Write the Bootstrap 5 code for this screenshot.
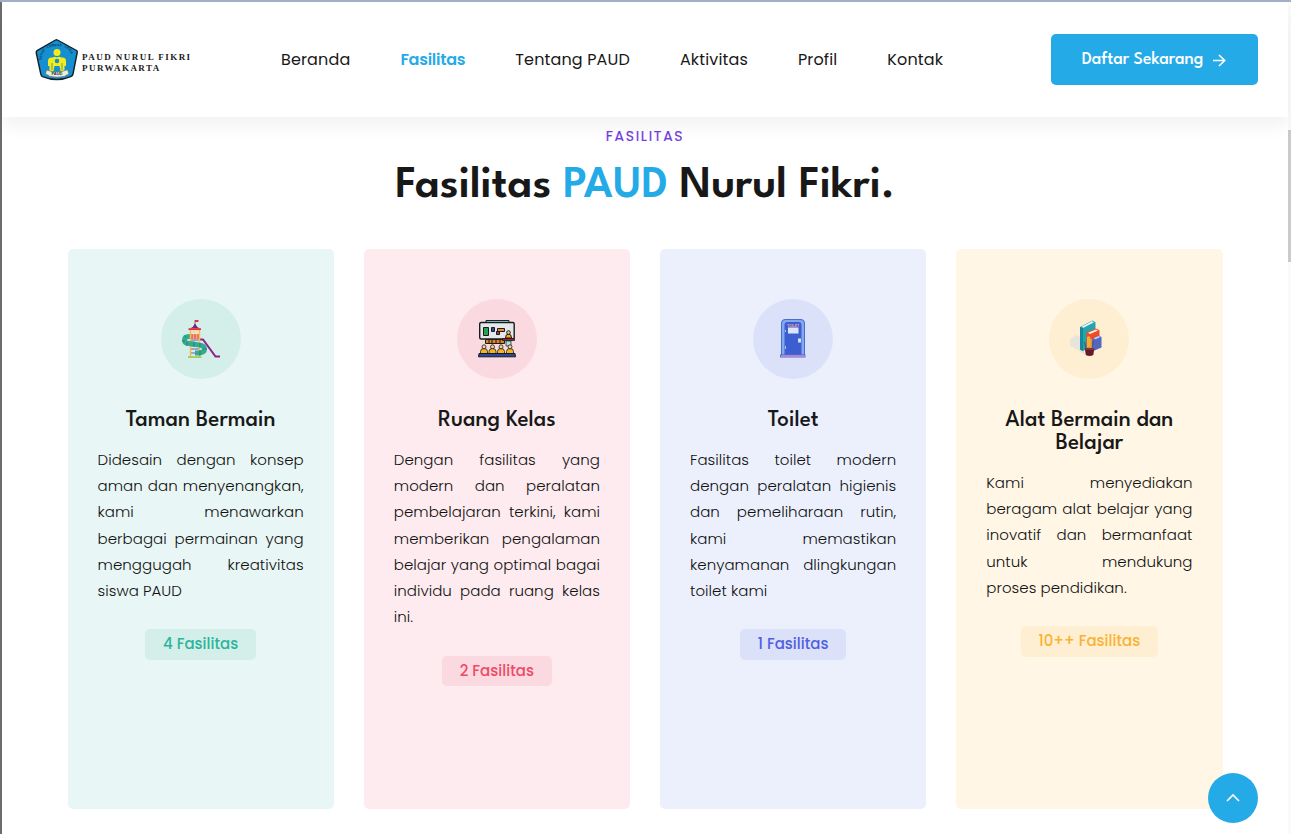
<!DOCTYPE html>
<html lang="id">
<head>
<meta charset="utf-8">
<meta name="viewport" content="width=device-width, initial-scale=1">
<title>PAUD Nurul Fikri Purwakarta</title>
<link rel="stylesheet" href="https://cdn.jsdelivr.net/npm/bootstrap@5.3.0/dist/css/bootstrap.min.css">
<style>
  :root { --brand: #25aae8; --ink: #181818; }
  body { font-family: Poppins, Inter, sans-serif; color: var(--ink); height: 834px; overflow: hidden; border-top: 2px solid #a3afc5; background: #fff; }
  .page-shell { height: 832px; border-left: 2px solid #6c6c6c; }
  .site-header { height: 115px; padding: 0 30px 0 33px; background: #fff; box-shadow: 0 10px 15px rgba(25,25,25,.05); z-index: 2; }
  .brand-mark { width: 158px; }
  .brand-text { font: 700 9px/11px "Liberation Serif", serif; letter-spacing: 1.45px; color: #222; white-space: nowrap; margin: 6px 0 0 2px; }
  .main-menu { gap: 50px; margin-left: 88px; }
  .main-menu a { color: var(--ink); font-size: 16px; line-height: 24px; text-decoration: none; white-space: nowrap; letter-spacing: .14px; }
  .main-menu a.active { color: var(--brand); font-weight: 600; letter-spacing: -.25px; }
  .btn-signup { width: 207px; height: 51px; border-radius: 5px; background: var(--brand); color: #fff; font: 500 17.6px/24px "League Spartan", Lato, sans-serif; padding: 0; }
  .btn-signup span { padding-top: 1px; }
  .eyebrow { color: #6f3be0; font-size: 14px; line-height: 20px; letter-spacing: 1.75px; margin-top: 9px; font-weight: 400; -webkit-text-stroke: .2px; }
  .headline { font: 600 45px/50px "League Spartan", Lato, sans-serif; margin: 15px 0 38px; }
  .headline span { color: var(--brand); }
  .facility-row { width: 1185px; --bs-gutter-x: 30px; }
  .facility { height: 560px; border-radius: 5px; padding: 50px 30px 0; background: var(--bg); }
  .facility .round { width: 80px; height: 80px; background: var(--tint); margin-bottom: 30px; flex: none; }
  .facility h3 { font: 500 23px/23px "League Spartan", Lato, sans-serif; margin: 0 -5px 14.8px; text-align: center; }
  .facility p { color: #111; font-size: 15px; line-height: 26.25px; font-weight: 300; text-align: justify; margin: 0 0 25px; width: 206.25px; letter-spacing: .05px; }
  .facility .tag { background: var(--tint); color: var(--fg); height: 30.500px; width: var(--w); line-height: 30px; font-size: 15px; font-weight: 500; border-radius: 5px; text-align: center; }
  .f-green { --bg: #e8f6f5; --tint: #d4efea; --fg: #2db59b; --w: 111px; }
  .f-pink { --bg: #fdebef; --tint: #fbd9e0; --fg: #ee4a67; --w: 110px; }
  .f-blue { --bg: #ecf0fd; --tint: #dbe1f9; --fg: #5260df; --w: 106px; }
  .f-gold { --bg: #fff6e6; --tint: #ffefd2; --fg: #f9b234; --w: 137px; }
  .scroll-track { width: 3px; background: #fafafa; flex: none; }
  .scroll-thumb { height: 132px; margin-top: 128px; background: #cacaca; }
  .to-top { right: 33px; bottom: 11px; width: 50px; height: 50px; background: var(--brand); z-index: 3; }
</style>
</head>
<body>
<div class="page-shell d-flex">
  <div class="flex-grow-1">
    <header class="site-header position-relative d-flex align-items-center">
      <a class="brand-mark d-flex align-items-center text-decoration-none" href="#">
        <svg class="flex-shrink-0" width="45" height="44" viewBox="0 0 45 44">
          <path d="M20.500 2q1-.6 2 0L41.500 12.500q1 .6.700 2L38 36q-.4 2-2.300 2.600Q22 44.500 7.500 38.600 6.300 38 5.800 36L1.300 15q-.3-1.500.8-2.400Z" fill="#168fd0" stroke="#10212c" stroke-width="1.400"/>
          <path id="arc" d="M6.500 22Q7 8.500 21.700 8T37 22" fill="none"/>
          <text font-family="Liberation Sans" font-size="3.300" font-weight="700" fill="#0c3855"><textPath href="#arc">SEHAT · CERDAS · CERIA</textPath></text>
          <g fill="#f5ec18"><circle cx="22" cy="14.500" r="3.500"/><path d="M17.500 19.500q2.500-1.500 4.500 0 2-1.500 4.500 0 4.500-.5 4.500 3.500v5h-1.500v5h-4l-1-5h-5l-1 5h-4v-5H13v-5q0-4 4.500-3.500Z"/></g>
          <circle cx="22" cy="23" r="2.300" fill="#168fd0"/><path d="M17 25v7M27 25v7M22 28v5" stroke="#168fd0" stroke-width=".8"/>
          <path d="M11.500 32q10.500 4 21-.3l1.500 4.500q-3 .5-4 2-8 2-15.500 0-1-1.500-4-2Z" fill="#eceddc" stroke="#656a5a" stroke-width=".6"/>
          <text x="22" y="37.200" text-anchor="middle" font-family="Liberation Sans" font-size="4" font-weight="700" fill="#333">PAUD</text>
        </svg>
        <span class="brand-text">PAUD NURUL FIKRI<br>PURWAKARTA</span>
      </a>
      <nav class="main-menu d-flex">
        <a href="#">Beranda</a><a href="#" class="active">Fasilitas</a><a href="#">Tentang PAUD</a><a href="#">Aktivitas</a><a href="#">Profil</a><a href="#">Kontak</a>
      </nav>
      <a href="#" class="btn btn-signup ms-auto d-flex align-items-center justify-content-center gap-2"><span>Daftar Sekarang</span>
        <svg width="16" height="16" viewBox="0 0 16 16" fill="none" stroke="#fff" stroke-width="1.600"><path d="M2 8.500h11.500M8 3l5.700 5.500L8 14"/></svg>
      </a>
    </header>
    <main>
      <div class="text-center">
        <div class="eyebrow">FASILITAS</div>
        <h2 class="headline">Fasilitas <span>PAUD</span> Nurul Fikri.</h2>
      </div>
      <div class="row facility-row mx-auto">
        <div class="col-3"><article class="facility f-green d-flex flex-column align-items-center">
          <div class="round rounded-circle">
            <svg width="80" height="80" viewBox="0 0 80 80">
              <path d="M34 21v5" stroke="#777"/><path d="M34 21h3.500v2H34Z" fill="#dc323c"/>
              <path d="M38 40.500h4L54.500 57.500H59" fill="none" stroke="#8e218e" stroke-width="2"/>
              <path d="M31 37.500h-3q-4.500 0-4.500 3.500t5 3.500l7 1" fill="none" stroke="#35aa91" stroke-width="5"/>
              <path d="M23.500 36.500l2 2M21 42h3M26 43v4" stroke="#167f70" stroke-width=".8"/>
              <path d="M30 35h8v5h-8Z" fill="#f07054"/><path d="M32.500 35v5M35.500 35v5" stroke="#f7b79a" stroke-width=".8"/>
              <path d="M30 41h8M30 50h8M30 54h8" stroke="#9987ba" stroke-width="1.600"/>
              <path d="M29.500 31v27M38.500 31v27" stroke="#f2bd55" stroke-width="1.500"/><path d="M30 31h8v3h-8Z" fill="#f9dda0"/>
              <path d="M28 44.500l10 1.500q5.500.5 5.500 4t-5.500 4h-4" fill="none" stroke="#35aa91" stroke-width="5"/>
              <path d="M33 43.500v4M39 44v4M42 50h4M39 51.500v5" stroke="#167f70" stroke-width=".8"/>
              <path d="M34 24.500q1.500 3.500 5 5H29q3.500-1.500 5-5Z" fill="#792383"/><path d="M27.500 29.300h12.500v1.700H27.500Z" fill="#e5293e"/><path d="M27 57.300h13.500v1.600H27Z" fill="#98c94b"/>
            </svg>
          </div>
          <h3>Taman Bermain</h3>
          <p>Didesain dengan konsep aman dan menyenangkan, kami menawarkan berbagai permainan yang menggugah kreativitas siswa PAUD</p>
          <div class="tag">4 Fasilitas</div>
        </article></div>
        <div class="col-3"><article class="facility f-pink d-flex flex-column align-items-center">
          <div class="round rounded-circle">
            <svg width="80" height="80" viewBox="0 0 80 80">
              <path d="M29 23v-1.500h23V23" fill="#9be4df" stroke="#1b2329" stroke-width="1"/>
              <rect x="22.700" y="23.500" width="34.500" height="16.500" rx="1.500" fill="#e4e8ea" stroke="#171c20" stroke-width="1.400"/>
              <path d="M26.500 28.500h5v8h-5Z" fill="#28a34b" stroke="#171c20"/><path d="M34.500 28.500h3v4h-3Z" fill="#294a9d" stroke="#171c20"/><path d="M40.500 29.500h7v3h-7Z" fill="#ee8b20" stroke="#171c20"/><path d="M39.500 32.500h3v3h-3Z" fill="#b83245" stroke="#171c20"/>
              <path d="M28.500 40.500h19v4h-19Z" fill="#e3831d" stroke="#171c20"/><path d="M32 40v5M35 40v5M39 40v5M43 40v5" stroke="#171c20"/>
              <path d="M48.500 39q0-4 3-4t3 4Z" fill="#f3ac18" stroke="#171c20"/><circle cx="51.500" cy="33.500" r="1.800" fill="#f6c797" stroke="#171c20"/>
              <path d="M49 42h5v5h-5Z" fill="#a2e6df" stroke="#171c20" stroke-width=".7"/><path d="M45.500 39.500h12v2h-12Z" fill="#9d2038" stroke="#171c20" stroke-width=".8"/>
              <g stroke="#171c20" stroke-width=".8"><path fill="#f6b51b" d="M23.500 54.500v-2q0-3 3.500-3t3.500 3v2ZM32 54.500v-2q0-3 3.500-3t3.500 3v2ZM40.500 54.500v-2q0-3 3.500-3t3.500 3v2ZM49.500 54.500v-2q0-3 3.500-3t3.500 3v2Z"/><g fill="#f6d0a1"><circle cx="27" cy="47.800" r="2"/><circle cx="35.500" cy="47.800" r="2"/><circle cx="44" cy="47.800" r="2"/><circle cx="53" cy="47.800" r="2"/></g></g>
              <path d="M22 54.500h36l.5 3.300h-37Z" fill="#2b469e" stroke="#171c20"/>
            </svg>
          </div>
          <h3>Ruang Kelas</h3>
          <p>Dengan fasilitas yang modern dan peralatan pembelajaran terkini, kami memberikan pengalaman belajar yang optimal bagai individu pada ruang kelas ini.</p>
          <div class="tag">2 Fasilitas</div>
        </article></div>
        <div class="col-3"><article class="facility f-blue d-flex flex-column align-items-center">
          <div class="round rounded-circle">
            <svg width="80" height="80" viewBox="0 0 80 80">
              <path d="M28.500 56V24q0-3.500 3.500-3.500h16q3.500 0 3.500 3.500v32Z" fill="#82a9ef" stroke="#4a6bd2"/>
              <path d="M31.500 56V26q0-3 3-3h11q3 0 3 3v30Z" fill="#3c5ed1"/>
              <path d="M35 28.500h10.500v6H35Z" fill="#dce5fb"/><path d="M45 39.500h3v4h-3Z" fill="#d5e2fa"/><path d="M32.500 31v2M32.500 47v3" stroke="#abc5fa"/>
              <text x="40" y="27.600" text-anchor="middle" font-family="Liberation Sans" font-size="3.400" font-weight="700" fill="#efa4a0">TOILET</text>
              <path d="M27 55.500h25.500v3H27Z" fill="#526bce"/><path d="M28 57h24" stroke="#ed9cc5" stroke-width="1.200"/>
            </svg>
          </div>
          <h3>Toilet</h3>
          <p>Fasilitas toilet modern dengan peralatan higienis dan pemeliharaan rutin, kami memastikan kenyamanan dlingkungan toilet kami</p>
          <div class="tag">1 Fasilitas</div>
        </article></div>
        <div class="col-3"><article class="facility f-gold d-flex flex-column align-items-center">
          <div class="round rounded-circle">
            <svg width="80" height="80" viewBox="0 0 80 80">
              <path d="m21 40 6-4 5 2v12l-4 .5-7-4Z" fill="#e6e4dc"/><path d="m29 51 6-2v6Z" fill="#dedbd3"/>
              <path d="m31 28 12.500-6.500 3 1.700v22L34 52l-3-1.500Z" fill="#26a3ae"/><path d="m31 28 3 1.500V52l-3-1.500Z" fill="#178895"/><path d="m32.500 27.700 10.500-5.400 2 1-10.500 5.400Z" fill="#edfaf8"/>
              <path d="m37.500 33.500 9.500-4 3.500 1.700V44l-10 6-3-2Z" fill="#ee4d26"/><path d="m39 33.700 8-3.300 2 1-8 3.700Z" fill="#fff0e7"/>
              <path d="m43.500 39.500 6-3 3 1.500v10.500l-7 3-2-1Z" fill="#5367c1"/><path d="m44.500 39.300 5-2.300 2 1-5 2.300Z" fill="#c8d2f4"/>
              <path d="M38 51V38l2-1 1.500 2v12" fill="#f2ae32"/><path d="m35.500 43 2 8M44.500 42l-2 9" stroke="#3d638e" stroke-width="1.300"/><path d="M42 40v10" stroke="#efc94b"/>
              <path d="M35.800 49.500h9.500l-1 6.500q-3.700 2-7.500 0Z" fill="#651a27"/><ellipse cx="40.500" cy="49.900" rx="4.700" ry="1.200" fill="#87323a"/>
            </svg>
          </div>
          <h3>Alat Bermain dan Belajar</h3>
          <p>Kami menyediakan beragam alat belajar yang inovatif dan bermanfaat untuk mendukung proses&nbsp;pendidikan.</p>
          <div class="tag">10++ Fasilitas</div>
        </article></div>
      </div>
    </main>
  </div>
  <div class="scroll-track"><div class="scroll-thumb"></div></div>
</div>
<a href="#" class="to-top position-fixed rounded-circle d-flex align-items-center justify-content-center" aria-label="Ke atas">
  <svg width="16" height="16" viewBox="0 0 16 16" fill="none" stroke="#fff" stroke-width="1.600"><path d="m2 11 6-6 6 6"/></svg>
</a>
<script src="https://cdn.jsdelivr.net/npm/bootstrap@5.3.0/dist/js/bootstrap.bundle.min.js"></script>
</body>
</html>
